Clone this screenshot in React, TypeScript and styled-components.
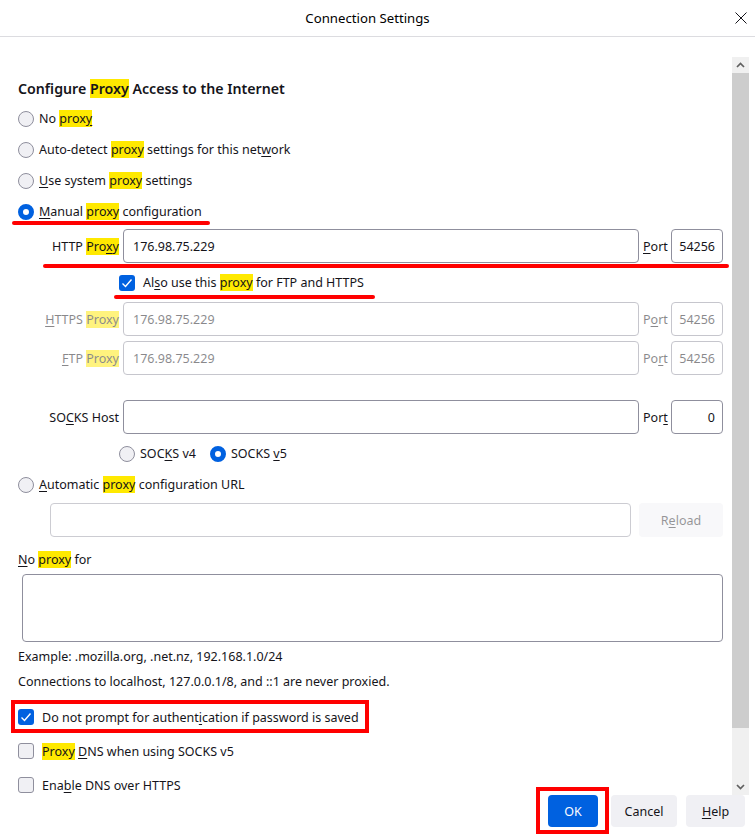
import React from 'react';
import styled, { createGlobalStyle, css } from 'styled-components';

const GlobalStyle = createGlobalStyle`
  html, body {
    margin: 0;
    padding: 0;
    background: #ffffff;
  }
  body {
    font-family: "Noto Sans", "Open Sans", sans-serif;
    font-size: 12.5px;
    color: #15141a;
  }
  * {
    box-sizing: border-box;
  }
`;

const Dialog = styled.div`
  width: 755px;
  height: 838px;
  display: flex;
  flex-direction: column;
  overflow: hidden;
  background: #ffffff;
`;

const TitleBar = styled.div`
  flex: none;
  height: 37px;
  display: flex;
  align-items: center;
  border-bottom: 1px solid #dcdce0;
`;

const Title = styled.div`
  flex: 1;
  text-align: center;
  padding-left: 8px;
  font-size: 13.2px;
  color: #000000;
`;

const CloseButton = styled.div`
  width: 28px;
  height: 36px;
  display: flex;
  align-items: center;
  justify-content: center;
`;

const Body = styled.div`
  flex: none;
  height: 758px;
  display: flex;
  padding-top: 20px;
`;

const Content = styled.div`
  flex: 1;
  min-width: 0;
  padding: 0 9px 0 18px;
  overflow: hidden;
  display: flex;
  flex-direction: column;

  & > * {
    flex-shrink: 0;
  }
`;

const Scrollbar = styled.div`
  flex: none;
  width: 17px;
  margin-right: 6px;
  display: flex;
  flex-direction: column;
  background: #f0f0f0;
`;

const ScrollArrow = styled.div`
  height: 16px;
  display: flex;
  align-items: center;
  justify-content: center;
`;

const ScrollThumb = styled.div`
  height: 655px;
  background: #cdcdcd;
`;

const ScrollTrack = styled.div`
  flex: 1;
`;

const Footer = styled.div`
  flex: 1;
  display: flex;
  justify-content: flex-end;
  align-items: flex-start;
  gap: 9px;
  padding-right: 10px;
`;

const Heading = styled.div`
  margin-top: 22px;
  height: 20px;
  line-height: 20px;
  font-size: 14.2px;
  font-weight: 600;
  white-space: nowrap;
`;

const Mark = styled.span`
  background: #ffe900;
`;

const Key = styled.span`
  text-decoration: underline;
  text-underline-offset: 2px;
`;

const Text = styled.span`
  white-space: nowrap;
`;

const OptionRow = styled.div<{ $indent?: number; $mt?: number; $height?: number }>`
  position: relative;
  display: flex;
  align-items: center;
  height: ${(p) => p.$height ?? 31}px;
  margin-top: ${(p) => p.$mt ?? 0}px;
  padding-left: ${(p) => p.$indent ?? 0}px;
  white-space: nowrap;
`;

const RadioChoice = styled.span<{ $gap?: number }>`
  display: inline-flex;
  align-items: center;
  margin-right: ${(p) => p.$gap ?? 0}px;
`;

const Radio = styled.span<{ $checked?: boolean }>`
  flex: none;
  width: 16px;
  height: 16px;
  border-radius: 50%;
  margin-right: 5px;
  ${(p) =>
    p.$checked
      ? css`
          border: 5px solid #0061e0;
          background: #ffffff;
        `
      : css`
          border: 1px solid #8f8f9d;
          background: #f0f0f4;
        `}
`;

const Checkbox = styled.span<{ $checked?: boolean }>`
  flex: none;
  width: 16px;
  height: 16px;
  border-radius: 3px;
  margin-right: 8px;
  display: flex;
  align-items: center;
  justify-content: center;
  ${(p) =>
    p.$checked
      ? css`
          background: #0061e0;
        `
      : css`
          border: 1px solid #8f8f9d;
          background: #f0f0f4;
        `}
`;

const FieldRow = styled.div<{ $mt?: number; $disabled?: boolean }>`
  position: relative;
  display: grid;
  grid-template-columns: 101px 1fr 24px 52px;
  column-gap: 4px;
  align-items: center;
  height: 34px;
  margin-top: ${(p) => p.$mt ?? 0}px;
  opacity: ${(p) => (p.$disabled ? 0.5 : 1)};
`;

const FieldLabel = styled.span`
  text-align: right;
  white-space: nowrap;
`;

const PortLabel = styled.span`
  white-space: nowrap;
`;

const TextInput = styled.input<{ $right?: boolean }>`
  width: 100%;
  height: 34px;
  min-width: 0;
  margin: 0;
  border: 1px solid #8f8f9d;
  border-radius: 4px;
  background: #ffffff;
  padding: ${(p) => (p.$right ? '0 7px 0 3px' : '0 9px')};
  font-family: inherit;
  font-size: 12.5px;
  color: #15141a;
  text-align: ${(p) => (p.$right ? 'right' : 'left')};
  outline: none;

  &:disabled {
    color: #15141a;
    background: #ffffff;
  }
`;

const UrlRow = styled.div`
  display: flex;
  gap: 8px;
  height: 34px;
  margin-top: 3px;
  padding-left: 32px;
  opacity: 0.45;
`;

const ReloadButton = styled.div`
  flex: none;
  width: 84px;
  display: flex;
  align-items: center;
  justify-content: center;
  border-radius: 4px;
  background: #f0f0f4;
`;

const Label = styled.div<{ $mt: number }>`
  margin-top: ${(p) => p.$mt}px;
  height: 18px;
  line-height: 18px;
  white-space: nowrap;
`;

const TextArea = styled.div`
  margin: 5px 0 0 4px;
  height: 68px;
  border: 1px solid #8f8f9d;
  border-radius: 4px;
`;

const RedLine = styled.span<{ $left: number; $top: number; $width: number }>`
  position: absolute;
  left: ${(p) => p.$left}px;
  top: ${(p) => p.$top}px;
  width: ${(p) => p.$width}px;
  height: 4px;
  border-radius: 2px;
  background: #ff0000;
  pointer-events: none;
`;

const RedBox = styled.span<{ $left: number; $top: number; $width: number; $height: number }>`
  position: absolute;
  left: ${(p) => p.$left}px;
  top: ${(p) => p.$top}px;
  width: ${(p) => p.$width}px;
  height: ${(p) => p.$height}px;
  border: 4px solid #ff0000;
  pointer-events: none;
`;

const ButtonSlot = styled.div<{ $extra?: number }>`
  position: relative;
  margin-right: ${(p) => p.$extra ?? 0}px;
`;

const Button = styled.button<{ $primary?: boolean; $width: number }>`
  width: ${(p) => p.$width}px;
  height: 32px;
  padding: 0;
  border: none;
  border-radius: 4px;
  font-family: inherit;
  font-size: 12.5px;
  background: ${(p) => (p.$primary ? '#0061e0' : '#f0f0f4')};
  color: ${(p) => (p.$primary ? '#fbfbfe' : '#15141a')};
`;

const Check = () => (
  <svg width="12" height="12" viewBox="0 0 12 12">
    <polyline points="1.5,6.5 4.5,9.5 10.5,2.5" fill="none" stroke="#ffffff" strokeWidth="1.4" />
  </svg>
);

const Chevron = ({ up }: { up?: boolean }) => (
  <svg width="9" height="6" viewBox="0 0 9 6">
    <polyline
      points={up ? '1,5 4.5,1.5 8,5' : '1,1 4.5,4.5 8,1'}
      fill="none"
      stroke="#606060"
      strokeWidth="1.7"
    />
  </svg>
);

export default function App() {
  return (
    <>
      <GlobalStyle />
      <Dialog>
        <TitleBar>
          <Title>Connection Settings</Title>
          <CloseButton>
            <svg width="12" height="12" viewBox="0 0 12 12">
              <path d="M0.5 0.5 L11.5 11.5 M11.5 0.5 L0.5 11.5" stroke="#15141a" strokeWidth="1" />
            </svg>
          </CloseButton>
        </TitleBar>

        <Body>
          <Content>
            <Heading>
              Configure <Mark>Proxy</Mark> Access to the Internet
            </Heading>

            <OptionRow $mt={4}>
              <Radio />
              <Text>
                No <Mark>prox<Key>y</Key></Mark>
              </Text>
            </OptionRow>
            <OptionRow>
              <Radio />
              <Text>
                Auto-detect <Mark>proxy</Mark> settings for this net<Key>w</Key>ork
              </Text>
            </OptionRow>
            <OptionRow>
              <Radio />
              <Text>
                <Key>U</Key>se system <Mark>proxy</Mark> settings
              </Text>
            </OptionRow>
            <OptionRow>
              <Radio $checked />
              <Text>
                <Key>M</Key>anual <Mark>proxy</Mark> configuration
              </Text>
              <RedLine $left={-6} $top={25} $width={198} />
            </OptionRow>

            <FieldRow $mt={2}>
              <FieldLabel>
                HTTP <Mark>Pro<Key>x</Key>y</Mark>
              </FieldLabel>
              <TextInput readOnly value="176.98.75.229" />
              <PortLabel>
                <Key>P</Key>ort
              </PortLabel>
              <TextInput readOnly $right value="54256" />
              <RedLine $left={25} $top={35} $width={686} />
            </FieldRow>

            <OptionRow $indent={101} $height={39}>
              <Checkbox $checked>
                <Check />
              </Checkbox>
              <Text>
                Al<Key>s</Key>o use this <Mark>proxy</Mark> for FTP and HTTPS
              </Text>
              <RedLine $left={96} $top={32} $width={261} />
            </OptionRow>

            <FieldRow $disabled>
              <FieldLabel>
                <Key>H</Key>TTPS <Mark>Proxy</Mark>
              </FieldLabel>
              <TextInput disabled value="176.98.75.229" readOnly />
              <PortLabel>
                P<Key>o</Key>rt
              </PortLabel>
              <TextInput disabled $right value="54256" readOnly />
            </FieldRow>

            <FieldRow $mt={5} $disabled>
              <FieldLabel>
                <Key>F</Key>TP <Mark>Proxy</Mark>
              </FieldLabel>
              <TextInput disabled value="176.98.75.229" readOnly />
              <PortLabel>
                Po<Key>r</Key>t
              </PortLabel>
              <TextInput disabled $right value="54256" readOnly />
            </FieldRow>

            <FieldRow $mt={25}>
              <FieldLabel>
                SO<Key>C</Key>KS Host
              </FieldLabel>
              <TextInput readOnly value="" />
              <PortLabel>
                Por<Key>t</Key>
              </PortLabel>
              <TextInput readOnly $right value="0" />
            </FieldRow>

            <OptionRow $indent={101} $mt={4}>
              <RadioChoice $gap={14}>
                <Radio />
                <Text>
                  SOC<Key>K</Key>S v4
                </Text>
              </RadioChoice>
              <RadioChoice>
                <Radio $checked />
                <Text>
                  SOCKS <Key>v</Key>5
                </Text>
              </RadioChoice>
            </OptionRow>

            <OptionRow>
              <Radio />
              <Text>
                <Key>A</Key>utomatic <Mark>proxy</Mark> configuration URL
              </Text>
            </OptionRow>

            <UrlRow>
              <TextInput disabled readOnly value="" />
              <ReloadButton>
                <Text>
                  R<Key>e</Key>load
                </Text>
              </ReloadButton>
            </UrlRow>

            <Label $mt={14}>
              <Key>N</Key>o <Mark>proxy</Mark> for
            </Label>
            <TextArea />

            <Label $mt={6}>Example: .mozilla.org, .net.nz, 192.168.1.0/24</Label>
            <Label $mt={7}>Connections to localhost, 127.0.0.1/8, and ::1 are never proxied.</Label>

            <OptionRow $mt={10} $height={32}>
              <Checkbox $checked>
                <Check />
              </Checkbox>
              <Text>
                Do not prompt for authent<Key>i</Key>cation if password is saved
              </Text>
              <RedBox $left={-7} $top={-1} $width={358} $height={33} />
            </OptionRow>
            <OptionRow $mt={2} $height={32}>
              <Checkbox />
              <Text>
                <Mark>Proxy</Mark> <Key>D</Key>NS when using SOCKS v5
              </Text>
            </OptionRow>
            <OptionRow $mt={2} $height={32}>
              <Checkbox />
              <Text>
                Ena<Key>b</Key>le DNS over HTTPS
              </Text>
            </OptionRow>
          </Content>

          <Scrollbar>
            <ScrollArrow>
              <Chevron up />
            </ScrollArrow>
            <ScrollThumb />
            <ScrollTrack />
            <ScrollArrow>
              <Chevron />
            </ScrollArrow>
          </Scrollbar>
        </Body>

        <Footer>
          <ButtonSlot $extra={4}>
            <Button $primary $width={50}>
              OK
            </Button>
            <RedBox $left={-12} $top={-8} $width={73} $height={47} />
          </ButtonSlot>
          <Button $width={66}>Cancel</Button>
          <Button $width={59}>
            <Key>H</Key>elp
          </Button>
        </Footer>
      </Dialog>
    </>
  );
}
